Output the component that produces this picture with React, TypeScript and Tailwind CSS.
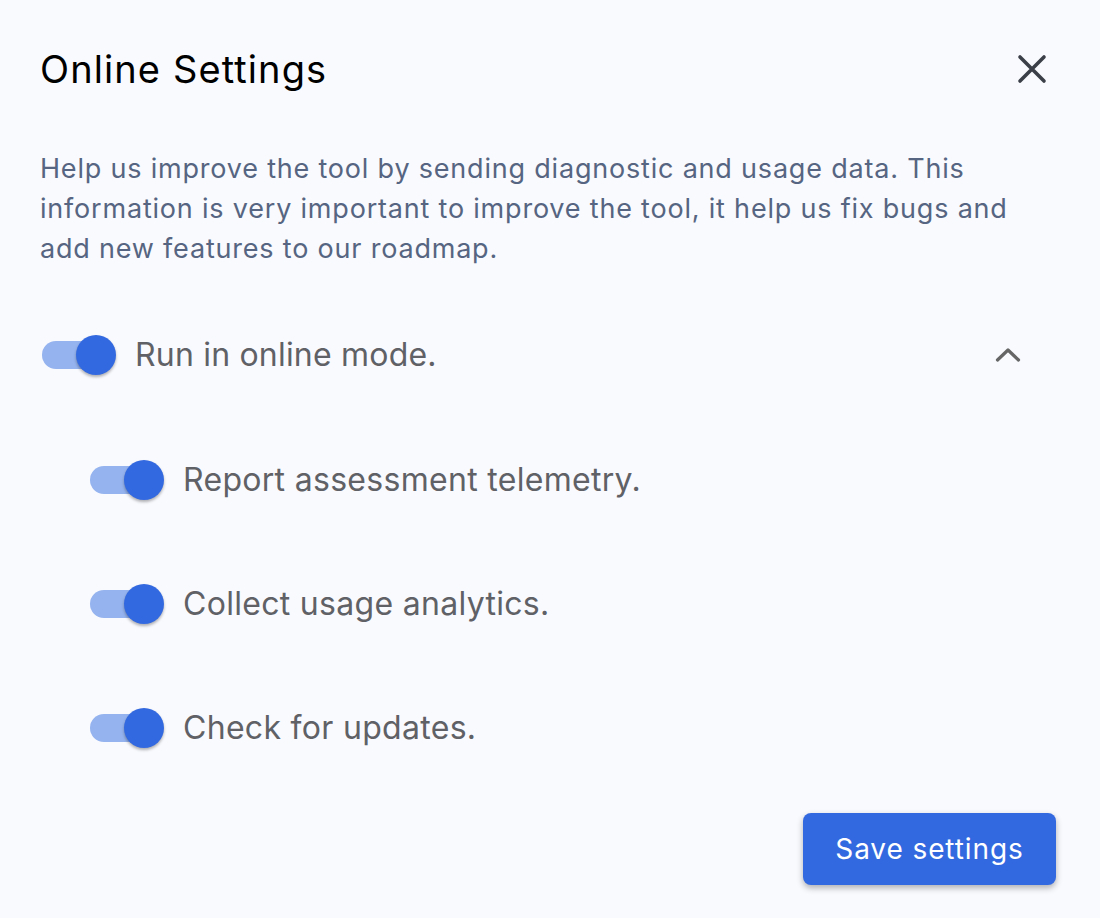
import { useState } from "react";

function Toggle({ on, onClick }: { on: boolean; onClick: () => void }) {
  return (
    <button onClick={onClick} className="relative w-[74px] h-10 ml-[2px] shrink-0">
      <span className={`absolute left-0 top-[6px] w-[70px] h-7 rounded-full ${on ? "bg-[#95b3ef]" : "bg-[#b8bcc4]"}`} />
      <span
        className={`absolute top-0 w-10 h-10 rounded-full shadow-[0_2px_3px_rgba(0,0,0,0.3)] ${on ? "right-0 bg-[#3369e0]" : "left-0 bg-white"}`}
      />
    </button>
  );
}

const subs = ["Report assessment telemetry.", "Collect usage analytics.", "Check for updates."];

export default function App() {
  const [online, setOnline] = useState(true);
  const [checks, setChecks] = useState([true, true, true]);

  return (
    <div className="w-[1100px] h-[918px] bg-[#f9fafe] font-['Inter',sans-serif] pl-10 pr-11 pt-10 flex flex-col">
      <div className="flex items-center justify-between h-[58px]">
        <h1 className="text-[38px] leading-none tracking-[1.1px] text-black">Online Settings</h1>
        <svg width="30" height="30" viewBox="0 0 30 30" className="mr-[9px] text-[#3b3f47]">
          <path d="M3 3l24 24M27 3L3 27" stroke="currentColor" strokeWidth="3.6" strokeLinecap="round" fill="none" />
        </svg>
      </div>

      <p className="mt-[51px] text-[27px] leading-[40px] text-[#566581] tracking-[0.8px]">
        Help us improve the tool by sending diagnostic and usage data. This information is very important to improve the tool, it help us fix bugs and add new features to our roadmap.
      </p>

      <div className="mt-[56px] flex items-center h-[60px] gap-[19px]">
        <Toggle on={online} onClick={() => setOnline(!online)} />
        <span className="text-[32px] tracking-[0.2px] text-[#5f6166] flex-1">Run in online mode.</span>
        <svg width="26" height="16" viewBox="0 0 26 16" className="mr-[35px] text-[#666666]">
          <path d="M2.5 13L13 3l10.5 10" stroke="currentColor" strokeWidth="3.2" strokeLinecap="round" strokeLinejoin="round" fill="none" />
        </svg>
      </div>

      <div className="mt-[65px] flex flex-col gap-16 pl-12">
        {subs.map((s, i) => (
          <div key={s} className="flex items-center h-[60px] gap-[19px]">
            <Toggle on={checks[i]} onClick={() => setChecks(checks.map((c, j) => (j === i ? !c : c)))} />
            <span className="text-[32px] tracking-[0.3px] text-[#5f6166]">{s}</span>
          </div>
        ))}
      </div>

      <div className="mt-[55px] flex justify-end">
        <button className="w-[253px] h-[72px] rounded-lg bg-[#3369e0] text-white text-[28px] tracking-[0.9px] shadow-[0_3px_6px_rgba(0,0,0,0.3)]">
          Save settings
        </button>
      </div>
    </div>
  );
}
